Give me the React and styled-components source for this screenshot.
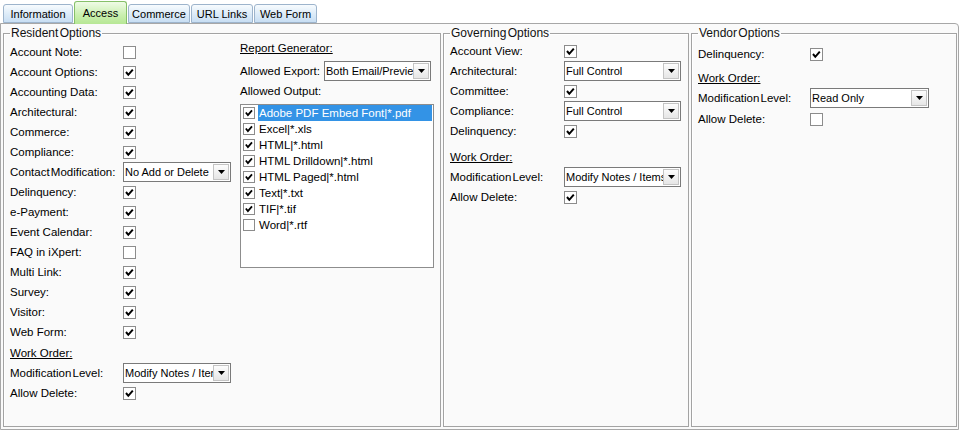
import React from 'react';
import styled, { createGlobalStyle } from 'styled-components';

const Global = createGlobalStyle`
    body {
        margin: 0;
        background: #fff;
        font-family: "Liberation Sans", Arial, sans-serif;
        font-size: 11.5px;
        color: #000;
    }
`;

const Screen = styled.div`
    width: 961px;
    height: 430px;
    overflow: hidden;
`;

const TabStrip = styled.div`
    display: flex;
    align-items: flex-end;
    gap: 1px;
    height: 23px;
    padding-left: 3px;
    position: relative;
    z-index: 1;
`;

const Tab = styled.div`
    box-sizing: border-box;
    width: ${p => p.$w}px;
    height: ${p => p.$active ? 23 : 19}px;
    margin-bottom: ${p => p.$active ? -1 : 0}px;
    display: flex;
    align-items: center;
    justify-content: center;
    font-size: 11px;
    border: 1px solid ${p => p.$active ? '#86c069' : '#9db4cc'};
    border-bottom: ${p => p.$active ? 'none' : '1px solid #9db4cc'};
    border-radius: 3px 3px 0 0;
    background: ${p => p.$active
        ? 'linear-gradient(#effbe6, #c9efae 60%, #b7e795)'
        : 'linear-gradient(#f7fbfe, #dcebf8 55%, #c8def3)'};
    padding-top: ${p => p.$active ? 0 : 1}px;
`;

const TabPage = styled.div`
    box-sizing: border-box;
    width: 959px;
    height: 407px;
    border: 1px solid #a7a7a7;
    border-radius: 0 4px 0 0;
    background: #fafafa;
    padding: 3px 2px 2px 2px;
    display: grid;
    grid-template-columns: 438px 246px 266px;
    column-gap: 2px;
`;

const Group = styled.fieldset`
    margin: 0;
    min-width: 0;
    padding: 0 6px 0 6px;
    border: 1px solid #a3a3a3;
    box-shadow: inset 1px 1px 0 #fff;
    display: ${p => p.$split ? 'flex' : 'block'};
`;

const Legend = styled.legend`
    padding: 0 1px;
    font-size: 12px;
    line-height: 13px;
    word-spacing: -2px;
    color: #111;
`;

const Column = styled.div`
    width: ${p => p.$w ? `${p.$w}px` : 'auto'};
    padding-top: ${p => p.$top}px;
`;

const Row = styled.div`
    display: grid;
    grid-template-columns: ${p => p.$label}px auto;
    align-items: center;
    height: 20px;
    margin-top: ${p => p.$gap || 0}px;
    white-space: nowrap;
`;

const Heading = styled.div`
    height: ${p => p.$h || 20}px;
    line-height: ${p => p.$h || 20}px;
    margin-top: ${p => p.$gap || 0}px;
    text-decoration: underline;
`;

const Label = styled.span`
    word-spacing: ${p => p.$tight ? '-2px' : 'normal'};
`;

const Box = styled.span`
    display: inline-flex;
    width: ${p => p.$size}px;
    height: ${p => p.$size}px;
    box-sizing: border-box;
    border: 1px solid #8c8c8c;
    background: #fff;
    align-items: center;
    justify-content: center;
`;

const Check = ({ on, size = 13 }) => (
    <Box $size={size}>
        {on && (
            <svg width={size - 2} height={size - 2} viewBox="0 0 11 11">
                <path d="M2 5 L4.3 7.8 L8.8 2.6" fill="none" stroke="#000" strokeWidth="2" />
            </svg>
        )}
    </Box>
);

const SelectBox = styled.div`
    box-sizing: border-box;
    width: ${p => p.$w}px;
    height: 20px;
    border: 1px solid #7a7a7a;
    background: #fff;
    display: flex;
    align-items: center;
    padding: 1px;
`;

const SelectText = styled.span`
    flex: 1;
    overflow: hidden;
    white-space: nowrap;
    font-size: 11px;
    line-height: 16px;
`;

const ArrowButton = styled.span`
    box-sizing: border-box;
    width: 16px;
    height: 16px;
    border: 1px solid #c4c4c4;
    background: linear-gradient(#fdfdfd, #e6e6e6);
    display: flex;
    align-items: center;
    justify-content: center;
`;

const Select = ({ value, w }) => (
    <SelectBox $w={w}>
        <SelectText>{value}</SelectText>
        <ArrowButton>
            <svg width="7" height="4" viewBox="0 0 7 4">
                <path d="M0 0 H7 L3.5 4 Z" fill="#000" />
            </svg>
        </ArrowButton>
    </SelectBox>
);

const ListBox = styled.div`
    box-sizing: border-box;
    width: 194px;
    height: 164px;
    margin-top: 3px;
    border: 1px solid #8d8d8d;
    background: #fff;
    padding: 0 1px 0 2px;
`;

const ListItem = styled.div`
    display: flex;
    align-items: center;
    height: 16px;
    gap: 3px;
    font-size: 11.5px;
`;

const ItemText = styled.span`
    flex: 1;
    height: 16px;
    line-height: 16px;
    padding-left: 1px;
    background: ${p => p.$selected ? '#3393e6' : 'transparent'};
    color: ${p => p.$selected ? '#fff' : '#000'};
`;

const tabs = [
    { name: 'Information', w: 70 },
    { name: 'Access', w: 53, active: true },
    { name: 'Commerce', w: 62 },
    { name: 'URL Links', w: 62 },
    { name: 'Web Form', w: 63 },
];

const residentChecks = [
    ['Account Note:', false],
    ['Account Options:', true],
    ['Accounting Data:', true],
    ['Architectural:', true],
    ['Commerce:', true],
    ['Compliance:', true],
    ['Contact Modification:', 'No Add or Delete'],
    ['Delinquency:', true],
    ['e-Payment:', true],
    ['Event Calendar:', true],
    ['FAQ in iXpert:', false],
    ['Multi Link:', true],
    ['Survey:', true],
    ['Visitor:', true],
    ['Web Form:', true],
];

const outputs = [
    ['Adobe PDF Embed Font|*.pdf', true],
    ['Excel|*.xls', true],
    ['HTML|*.html', true],
    ['HTML Drilldown|*.html', true],
    ['HTML Paged|*.html', true],
    ['Text|*.txt', true],
    ['TIF|*.tif', true],
    ['Word|*.rtf', false],
];

const Field = ({ label, value, labelW, selectW, gap }) => (
    <Row $label={labelW} $gap={gap}>
        <Label $tight={label.startsWith('Contact') || label.startsWith('Modification')}>{label}</Label>
        {typeof value === 'string'
            ? <Select value={value} w={selectW} />
            : <Check on={value} />}
    </Row>
);

export default function App() {
    return (
        <Screen>
            <Global />
            <TabStrip>
                {tabs.map(t => (
                    <Tab key={t.name} $w={t.w} $active={t.active}>{t.name}</Tab>
                ))}
            </TabStrip>
            <TabPage>
                <Group $split>
                    <Legend>Resident Options</Legend>
                    <Column $w={230} $top={2}>
                        {residentChecks.map(([l, v]) => (
                            <Field key={l} label={l} value={v} labelW={113} selectW={108} />
                        ))}
                        <Heading $gap={1}>Work Order:</Heading>
                        <Field label="Modification Level:" value="Modify Notes / Items" labelW={113} selectW={108} />
                        <Field label="Allow Delete:" value={true} labelW={113} />
                    </Column>
                    <Column $top={0}>
                        <Heading $h={16}>Report Generator:</Heading>
                        <Row $label={84} $gap={5}>
                            <Label>Allowed Export:</Label>
                            <Select value="Both Email/Preview" w={107} />
                        </Row>
                        <Row $label={84}>
                            <Label>Allowed Output:</Label>
                        </Row>
                        <ListBox>
                            {outputs.map(([l, on], i) => (
                                <ListItem key={l}>
                                    <Check on={on} size={12} />
                                    <ItemText $selected={i === 0}>{l}</ItemText>
                                </ListItem>
                            ))}
                        </ListBox>
                    </Column>
                </Group>

                <Group>
                    <Legend>Governing Options</Legend>
                    <Column $top={1}>
                        <Field label="Account View:" value={true} labelW={114} />
                        <Field label="Architectural:" value="Full Control" labelW={114} selectW={117} />
                        <Field label="Committee:" value={true} labelW={114} />
                        <Field label="Compliance:" value="Full Control" labelW={114} selectW={117} />
                        <Field label="Delinquency:" value={true} labelW={114} />
                        <Heading $gap={6}>Work Order:</Heading>
                        <Field label="Modification Level:" value="Modify Notes / Items" labelW={114} selectW={117} />
                        <Field label="Allow Delete:" value={true} labelW={114} />
                    </Column>
                </Group>

                <Group>
                    <Legend>Vendor Options</Legend>
                    <Column $top={4}>
                        <Field label="Delinquency:" value={true} labelW={112} />
                        <Heading $gap={4}>Work Order:</Heading>
                        <Field label="Modification Level:" value="Read Only" labelW={112} selectW={119} />
                        <Field label="Allow Delete:" value={false} labelW={112} gap={1} />
                    </Column>
                </Group>
            </TabPage>
        </Screen>
    );
}
